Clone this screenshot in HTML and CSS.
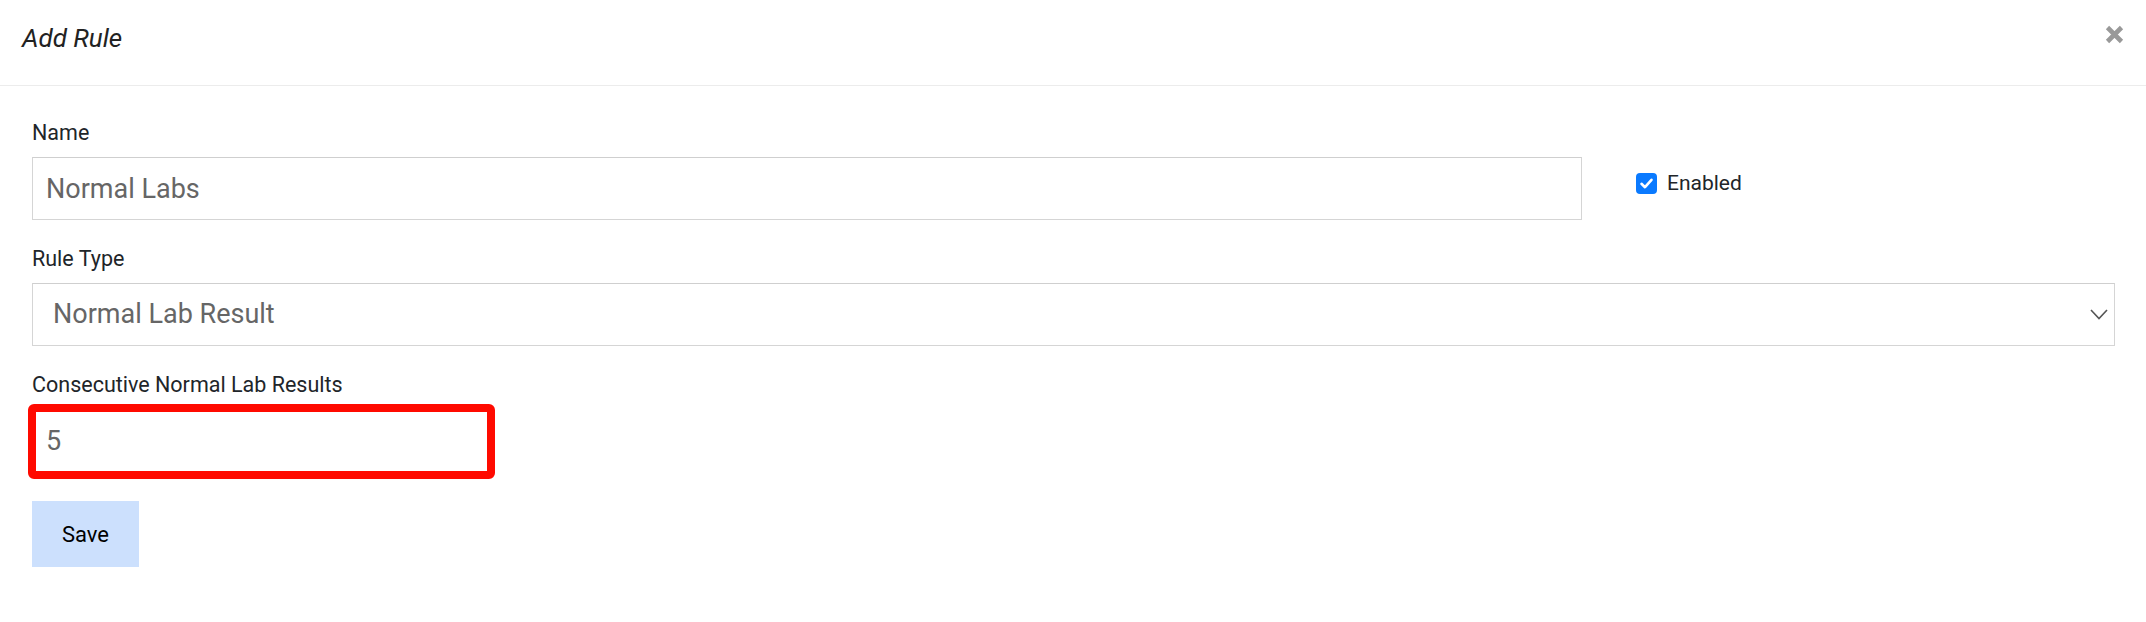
FILE: index.html
```html
<!DOCTYPE html>
<html lang="en">
<head>
<meta charset="utf-8">
<title>Add Rule</title>
<link rel="stylesheet" href="styles.css">
</head>
<body>
<div class="modal">
  <div class="modal-header">
    <h5 class="modal-title">Add Rule</h5>
    <button class="close" type="button" aria-label="Close">
      <svg width="19" height="19" viewBox="0 0 19 19"><path d="M2.5 2.5 L16.5 16.5 M16.5 2.5 L2.5 16.5" stroke="#999" stroke-width="4.6" fill="none"/></svg>
    </button>
  </div>
  <div class="modal-body">
    <div class="form-group">
      <label class="label">Name</label>
      <div class="name-row">
        <input class="control name-input" type="text" value="Normal Labs">
        <div class="check">
          <span class="checkbox"><svg width="21" height="21" viewBox="0 0 21 21"><path d="M5.5 10.8 L9 14.2 L15.5 6.8" stroke="#fff" stroke-width="2.6" fill="none" stroke-linecap="round" stroke-linejoin="round"/></svg></span>
          <span class="check-label">Enabled</span>
        </div>
      </div>
    </div>
    <div class="form-group">
      <label class="label">Rule Type</label>
      <div class="control select">
        <span>Normal Lab Result</span>
        <svg width="18" height="11" viewBox="0 0 18 11"><path d="M1 1 L9 9.5 L17 1" stroke="#555" stroke-width="1.6" fill="none"/></svg>
      </div>
    </div>
    <div class="form-group last">
      <label class="label">Consecutive Normal Lab Results</label>
      <div class="highlight">
        <input class="control" type="text" value="5">
      </div>
    </div>
    <button class="save" type="button">Save</button>
  </div>
</div>
</body>
</html>
```
FILE: styles.css
```css
* { box-sizing: border-box; }
html, body { margin: 0; padding: 0; background: #fff; }
body {
  font-family: Roboto, "Liberation Sans", sans-serif;
  color: #212529;
}
.modal-header {
  display: flex;
  justify-content: space-between;
  align-items: flex-start;
  padding: 20px 22px 29px 22px;
  border-bottom: 1px solid #ececec;
}
.modal-title {
  margin: 0;
  font-size: 26px;
  line-height: 36px;
  font-weight: 400;
  font-style: italic;
  color: #222;
}
.close {
  margin-top: 5px;
  padding: 0;
  border: 0;
  background: none;
  width: 19px;
  height: 19px;
  display: block;
}
.close svg { display: block; }
.modal-body {
  padding: 32px 31px 0 32px;
}
.form-group { margin-bottom: 24px; }
.form-group.last { margin-bottom: 29px; }
.label {
  display: block;
  font-size: 21.5px;
  line-height: 30px;
  margin-bottom: 9px;
  color: #212529;
}
.name-row {
  display: flex;
  align-items: flex-start;
}
.control {
  display: block;
  width: 100%;
  height: 63px;
  border: 1px solid #d5d5d5;
  border-top-color: #cfcfcf;
  background: #fff;
  font-family: Roboto, "Liberation Sans", sans-serif;
  font-size: 27px;
  color: #666;
  padding: 0 13px;
  outline: none;
  border-radius: 0;
}
.name-input { width: 1550px; flex: none; }
.check {
  display: flex;
  align-items: center;
  margin-top: 11px;
  margin-left: 54px;
  height: 30px;
}
.checkbox {
  width: 21px;
  height: 21px;
  border-radius: 4px;
  background: #0a7aff;
  display: block;
}
.checkbox svg { display: block; }
.check-label {
  margin-left: 10px;
  font-size: 21px;
  line-height: 30px;
  color: #212529;
}
.select {
  display: flex;
  align-items: center;
  justify-content: space-between;
  padding: 0 6px 0 20px;
}
.select span { line-height: 1; }
.select svg { display: block; }
.highlight {
  position: relative;
  width: 459px;
}
.highlight::after {
  content: "";
  position: absolute;
  top: -5px;
  bottom: -7px;
  left: -4px;
  right: -4px;
  border: 8px solid #ff0a00;
  border-radius: 6px;
  pointer-events: none;
}
.save {
  display: block;
  width: 107px;
  height: 66px;
  border: 0;
  border-radius: 0;
  background: #cce0fd;
  color: #000;
  font-family: Roboto, "Liberation Sans", sans-serif;
  font-size: 22px;
  padding: 0;
}
```
